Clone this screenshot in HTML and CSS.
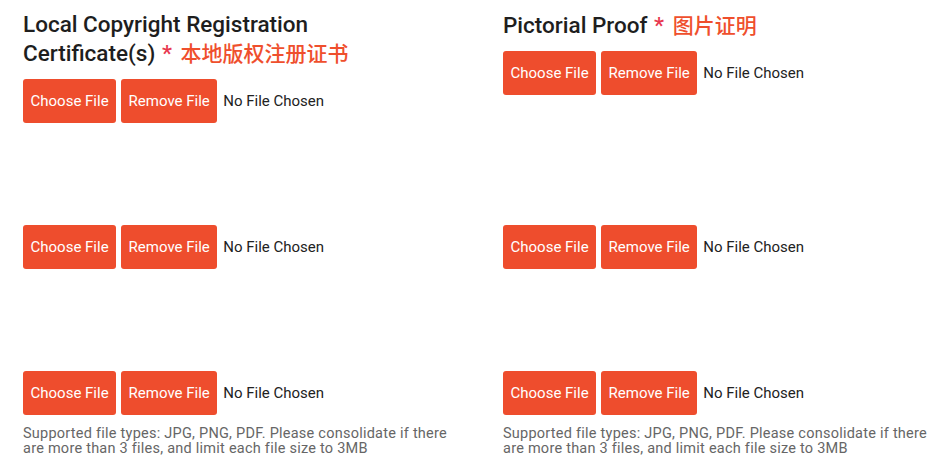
FILE: index.html
```html
<!DOCTYPE html>
<html lang="en">
<head>
<meta charset="utf-8">
<link rel="stylesheet" href="styles.css">
</head>
<body>
<div class="grid">
  <div class="cell">
    <h2 class="title">Local Copyright Registration Certificate(s) <span class="req">*</span> <span class="cn">本地版权注册证书</span></h2>
    <div class="slot">
      <div class="row"><button class="btn">Choose File</button><button class="btn">Remove File</button><span class="status">No File Chosen</span></div>
    </div>
  </div>
  <div class="cell">
    <h2 class="title">Pictorial Proof <span class="req">*</span> <span class="cn">图片证明</span></h2>
    <div class="slot">
      <div class="row"><button class="btn">Choose File</button><button class="btn">Remove File</button><span class="status">No File Chosen</span></div>
    </div>
  </div>
  <div class="cell">
    <div class="slot">
      <div class="row"><button class="btn">Choose File</button><button class="btn">Remove File</button><span class="status">No File Chosen</span></div>
    </div>
  </div>
  <div class="cell">
    <div class="slot">
      <div class="row"><button class="btn">Choose File</button><button class="btn">Remove File</button><span class="status">No File Chosen</span></div>
    </div>
  </div>
  <div class="cell">
    <div class="slot last">
      <div class="row"><button class="btn">Choose File</button><button class="btn">Remove File</button><span class="status">No File Chosen</span></div>
    </div>
    <p class="hint">Supported file types: JPG, PNG, PDF. Please consolidate if there are more than 3 files, and limit each file size to 3MB</p>
  </div>
  <div class="cell">
    <div class="slot last">
      <div class="row"><button class="btn">Choose File</button><button class="btn">Remove File</button><span class="status">No File Chosen</span></div>
    </div>
    <p class="hint">Supported file types: JPG, PNG, PDF. Please consolidate if there are more than 3 files, and limit each file size to 3MB</p>
  </div>
</div>
</body>
</html>
```

FILE: styles.css
```css
html, body {
  margin: 0;
  padding: 0;
  background: #ffffff;
}
body {
  font-family: Roboto, "Noto Sans CJK SC", sans-serif;
  color: #222;
}
.grid {
  display: grid;
  grid-template-columns: 480px 440px;
  padding: 10px 0 0 23px;
}
.title {
  margin: 0 0 12px 0;
  font-size: 22.5px;
  font-weight: 500;
  line-height: 28px;
  color: #1e1e1e;
  width: 345px;
}
.cell:nth-child(2) .title { width: 430px; }
.req {
  color: #e8384f;
  margin: 0 3px 0 1px;
}
.cn {
  color: #ef4f2d;
  font-size: 21px;
  font-family: "Noto Sans CJK SC", sans-serif;
  font-weight: 500;
}
.slot {
  height: 146px;
}
.slot.last {
  height: auto;
}
.row {
  display: flex;
  align-items: center;
  gap: 5px;
}
.btn {
  height: 44px;
  padding: 0 7.5px;
  border: none;
  border-radius: 3px;
  background: #ee4d2d;
  color: #ffffff;
  font-family: Roboto, sans-serif;
  font-size: 15px;
  cursor: pointer;
}
.status {
  font-size: 15px;
  color: #222;
  margin-left: 1px;
}
.hint {
  margin: 11px 0 0 0;
  font-size: 14.5px;
  letter-spacing: 0.24px;
  line-height: 15px;
  color: #666;
  width: 430px;
}
```
